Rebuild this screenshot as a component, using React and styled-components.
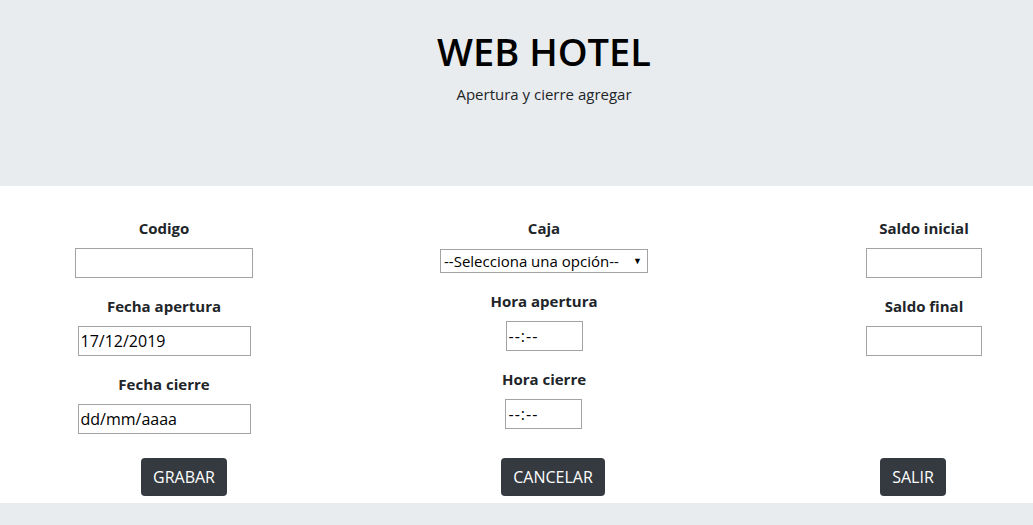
import React from "react";
import styled, { createGlobalStyle } from "styled-components";

const GlobalStyle = createGlobalStyle`
  body {
    margin: 0;
    background-color: #e9ecef;
    font-family: "Open Sans", "Noto Sans", sans-serif;
    color: #212529;
    font-size: 16px;
  }
`;

const Header = styled.header`
  height: 186px;
  box-sizing: border-box;
  padding: 27px 0 0 55px;
  text-align: center;
`;

const Title = styled.h1`
  margin: 0 0 7px;
  font-size: 38px;
  font-weight: 600;
  line-height: 48px;
  color: #000;
`;

const Subtitle = styled.p`
  margin: 0;
  font-size: 15px;
  line-height: 24px;
  color: #212529;
`;

const Main = styled.main`
  background-color: #fff;
  padding: 30px 0 7px;
`;

const Columns = styled.div`
  display: grid;
  grid-template-columns: 328px 432px 1fr;
  align-items: start;
`;

const Column = styled.div`
  display: flex;
  flex-direction: column;
  align-items: center;
  gap: 16px;
  padding-left: ${(p) => p.$shift || 0}px;
`;

const Field = styled.div`
  display: flex;
  flex-direction: column;
  align-items: center;
  gap: 8px;
`;

const Label = styled.label`
  font-weight: 700;
  font-size: 15px;
  line-height: 24px;
`;

const Input = styled.input`
  box-sizing: border-box;
  width: ${(p) => p.$w}px;
  height: 30px;
  margin: 0;
  padding: 0 2px;
  border: 1px solid #a3a3a3;
  background: #fff;
  font-family: inherit;
  font-size: 16px;
  letter-spacing: ${(p) => p.$spacing || 0}px;
  color: #000;
  outline: none;

  &::placeholder {
    color: #000;
  }
`;

const SelectWrap = styled.div`
  position: relative;
  margin-top: 1px;
`;

const Select = styled.select`
  appearance: none;
  box-sizing: border-box;
  width: 208px;
  height: 24px;
  margin: 0;
  padding: 0 18px 0 3px;
  border: 1px solid #a3a3a3;
  border-radius: 0;
  background: #fff;
  font-family: inherit;
  font-size: 15px;
  line-height: 22px;
  color: #000;
  outline: none;

  & + span {
    position: absolute;
    right: 6px;
    top: 5px;
    font-size: 9px;
    color: #000;
    pointer-events: none;
  }
`;

const Buttons = styled.div`
  display: grid;
  grid-template-columns: 368px 370px 1fr;
  margin-top: 24px;
`;

const ButtonCell = styled.div`
  display: flex;
  justify-content: center;
  padding-left: ${(p) => p.$shift || 0}px;
`;

const Button = styled.button`
  height: 38px;
  padding: 0 12px;
  border: none;
  border-radius: 4px;
  background-color: #343a40;
  color: #fff;
  font-family: inherit;
  font-size: 16px;
  cursor: pointer;
`;

const App = () => {
  return (
    <>
      <GlobalStyle />
      <Header>
        <Title>WEB HOTEL</Title>
        <Subtitle>Apertura y cierre agregar</Subtitle>
      </Header>
      <Main>
        <Columns>
          <Column>
            <Field>
              <Label>Codigo</Label>
              <Input $w={178} type="text" />
            </Field>
            <Field>
              <Label>Fecha apertura</Label>
              <Input $w={173} type="text" defaultValue="17/12/2019" />
            </Field>
            <Field>
              <Label>Fecha cierre</Label>
              <Input $w={173} type="text" placeholder="dd/mm/aaaa" />
            </Field>
          </Column>
          <Column>
            <Field>
              <Label>Caja</Label>
              <SelectWrap>
                <Select defaultValue="">
                  <option value="">--Selecciona una opción--</option>
                </Select>
                <span>▼</span>
              </SelectWrap>
            </Field>
            <Field>
              <Label>Hora apertura</Label>
              <Input $w={77} $spacing={1} type="text" placeholder="--:--" />
            </Field>
            <Field>
              <Label>Hora cierre</Label>
              <Input $w={77} $spacing={1} type="text" placeholder="--:--" />
            </Field>
          </Column>
          <Column $shift={55}>
            <Field>
              <Label>Saldo inicial</Label>
              <Input $w={116} type="text" />
            </Field>
            <Field>
              <Label>Saldo final</Label>
              <Input $w={116} type="text" />
            </Field>
          </Column>
        </Columns>
        <Buttons>
          <ButtonCell>
            <Button>GRABAR</Button>
          </ButtonCell>
          <ButtonCell>
            <Button>CANCELAR</Button>
          </ButtonCell>
          <ButtonCell $shift={55}>
            <Button>SALIR</Button>
          </ButtonCell>
        </Buttons>
      </Main>
    </>
  );
};

export default App;
